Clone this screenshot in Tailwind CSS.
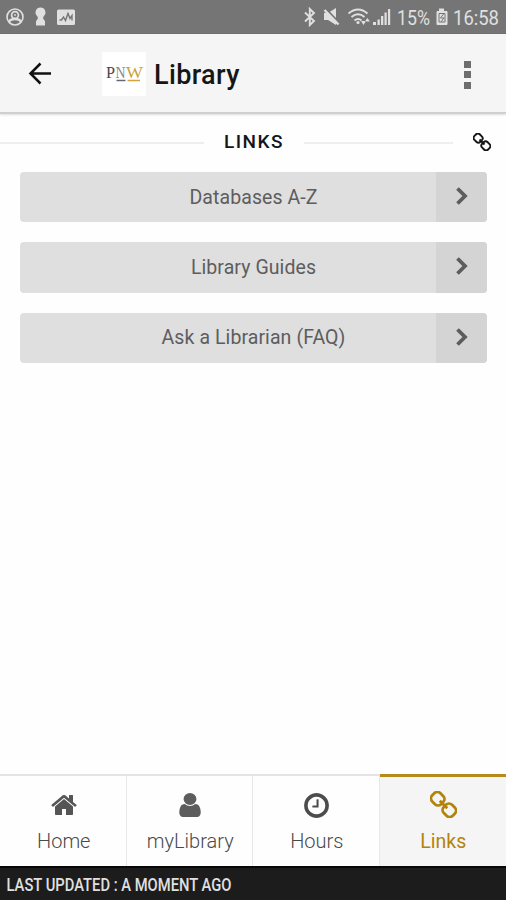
<!DOCTYPE html>
<html lang="en">
<head>
<meta charset="utf-8">
<title>Library</title>
<script src="https://cdn.jsdelivr.net/npm/@tailwindcss/browser@4"></script>
</head>
<body class="w-[506px] h-[900px] overflow-hidden bg-[#fefefe] font-['Roboto',sans-serif]">
<svg class="hidden">
  <symbol id="chain" viewBox="0 0 28 28">
    <g fill="none" stroke="currentColor" stroke-width="2.900" transform="rotate(45 14 14)">
      <rect x="-1" y="8" width="13" height="12" rx="4.500"/>
      <rect x="16" y="8" width="13" height="12" rx="4.500"/>
      <path d="M8.500 14h11" stroke-width="3"/>
    </g>
  </symbol>
  <symbol id="chevron" viewBox="0 0 14 20">
    <path d="M2.500 2.500L10 10l-7.500 7.500" fill="none" stroke="currentColor" stroke-width="3.800"/>
  </symbol>
</svg>
<div class="flex flex-col h-full">
  <div class="h-[34px] shrink-0 bg-[#757575] border-b border-[#666] text-[#e0e0e0]">
    <svg class="block" width="506" height="33" viewBox="0 0 506 33" fill="currentColor">
      <g fill="none" stroke="currentColor">
        <circle cx="15" cy="17" r="8" stroke-width="1.600"/>
        <circle cx="15" cy="15" r="3.400" stroke-width="1.700"/>
        <circle cx="15" cy="15" r=".6" stroke-width="1"/>
        <path d="M9 22q1-3 6-3t6 3" stroke-width="2.400"/>
      </g>
      <path d="M40.500 7.500a5 5 0 0 1 3.200 8.800l-.7 2 2 3v4.200h-9v-4.200l2-3-.7-2a5 5 0 0 1 3.200-8.800z"/>
      <rect x="57" y="9.500" width="18" height="15.500" rx="1.500"/>
      <path d="M59.500 20h2l2-3 2 3.500 2.500-7 2 5 2-3v5" fill="none" stroke="#757575" stroke-width="1.400"/>
      <path d="M305 12.500l9 8.500-4.200 4V9l4.200 4-9 8.500" fill="none" stroke="currentColor" stroke-width="1.900"/>
      <path d="M324 13h4l8-5v17l-8-5h-4z"/>
      <path d="M325 8l15 15.500" stroke="#757575" stroke-width="1.800"/>
      <path d="M324.500 10l14 14.500" stroke="currentColor" stroke-width="2.400"/>
      <g fill="none" stroke="currentColor" stroke-width="1.900">
        <path d="M348.500 13.500q9.500-8 19 0M351.500 17q6.500-5.500 13 0M354.500 20.500q3.500-3 7 0"/>
      </g>
      <circle cx="358" cy="22.500" r="1.600"/>
      <path d="M361 21l2.500 4 2.500-4zM365 21.500l2.300-3.500 2.700 3.500z"/>
      <path d="M373 22h3v3h-3zM377.500 19.500h2.300V25h-2.300zM381 16h2.300v9H381zM384.500 12.500h2.200V25h-2.200zM388 9h2.200v16H388z"/>
      <text x="397" y="25" font-size="20.500" textLength="33" lengthAdjust="spacingAndGlyphs">15%</text>
      <path d="M439 8.500h5V11h2.500q1 0 1 1v12q0 1-1 1h-9q-1 0-1-1V12q0-1 1-1h1.500z"/>
      <path d="M439 13.500h6v8.500h-6zM443.500 14l-3 4h3.500l-3 4" fill="none" stroke="#757575" stroke-width="1"/>
      <text x="453" y="25" font-size="20.500" textLength="46" lengthAdjust="spacingAndGlyphs">16:58</text>
    </svg>
  </div>
  <header class="flex items-center h-[80px] shrink-0 bg-[#f5f5f5] border-b-2 border-[#cfcfcf] pt-[2px] pl-[28px] shadow-[0_1px_2px_#ddd]">
    <svg class="w-6 h-6" viewBox="0 0 24 24" fill="none" stroke="#111" stroke-width="2.500"><path d="M23 11.500H2.500M12.500 1.500l-10 10 10 10"/></svg>
    <div class="ml-[50px] w-[44px] h-[44px] bg-white">
      <svg class="block" width="44" height="44" viewBox="0 0 44 44" font-family="Liberation Serif, serif" font-size="17">
        <text x="4" y="26" fill="#444" textLength="9" lengthAdjust="spacingAndGlyphs">P</text>
        <text x="13.500" y="26" fill="#888" textLength="10" lengthAdjust="spacingAndGlyphs">N</text>
        <text x="24" y="26" fill="#cba23a" textLength="17" lengthAdjust="spacingAndGlyphs">W</text>
        <path d="M14.500 28.500h9" stroke="#626875" stroke-width="1.500"/><path d="M25.500 28.500h12.500" stroke="#d0a43b" stroke-width="1.500"/>
      </svg>
    </div>
    <h1 class="ml-[8px] w-[90px] pt-[2px] text-[27px] font-medium text-[#161616] leading-8 whitespace-nowrap tracking-[0.350px]">Library</h1>
    <div class="ml-[220px] pt-[1px] flex flex-col gap-[3.500px]">
      <i class="block size-[7px] bg-[#6d6d6d]"></i><i class="block size-[7px] bg-[#6d6d6d]"></i><i class="block size-[7px] bg-[#6d6d6d]"></i>
    </div>
  </header>
  <main class="grow">
    <div class="flex items-center h-[58px]">
      <div class="w-[204px] h-[2px] bg-[#eee]"></div>
      <h2 class="w-[100px] pb-[2px] text-center text-[19px] font-medium tracking-[1.500px] text-[#151515]">LINKS</h2>
      <div class="w-[149px] h-[2px] bg-[#eee]"></div>
      <svg class="ml-[20px] mb-[2px] w-[18px] h-[18px] text-[#151515]"><use href="#chain"/></svg>
    </div>
    <div class="flex flex-col gap-[20px] pl-[20px] text-[19.500px] text-[#5d5d5d] tracking-[0.080px]">
      <a class="flex w-[467px] h-[50.300px] rounded-[4px] overflow-hidden bg-[#dfdfdf]"><span class="flex grow items-center justify-center pl-[51px]">Databases A-Z</span><span class="flex items-center justify-center w-[51px] bg-[#d4d4d4]"><svg class="w-[14px] h-[20px] mb-[2px]"><use href="#chevron"/></svg></span></a>
      <a class="flex w-[467px] h-[50.300px] rounded-[4px] overflow-hidden bg-[#dfdfdf]"><span class="flex grow items-center justify-center pl-[51px]">Library Guides</span><span class="flex items-center justify-center w-[51px] bg-[#d4d4d4]"><svg class="w-[14px] h-[20px] mb-[2px]"><use href="#chevron"/></svg></span></a>
      <a class="flex w-[467px] h-[50.300px] rounded-[4px] overflow-hidden bg-[#dfdfdf]"><span class="flex grow items-center justify-center pl-[51px]">Ask a Librarian (FAQ)</span><span class="flex items-center justify-center w-[51px] bg-[#d4d4d4]"><svg class="w-[14px] h-[20px] mb-[2px]"><use href="#chevron"/></svg></span></a>
    </div>
  </main>
  <nav class="grid grid-cols-4 h-[92px] shrink-0 text-[20px] font-light text-[#4a4a4a]">
    <a class="flex flex-col items-center border-t-2 border-r border-t-[#e3e3e3] border-r-[#e8e8e8] pt-[15px] pl-[2px]"><svg class="w-[28px] h-[28px]" viewBox="0 0 1792 1792" fill="#555"><path d="M1472 992v480q0 26-19 45t-45 19h-384v-384h-256v384h-384q-26 0-45-19t-19-45v-480q0-1 .5-3t.5-3l575-474 575 474q1 2 1 6zm223-69l-62 74q-8 9-21 11h-3q-13 0-21-7l-692-577-692 577q-12 8-24 7-13-2-21-11l-62-74q-8-10-7-23.500t11-21.500l719-599q32-26 76-26t76 26l244 204v-195q0-14 9-23t23-9h192q14 0 23 9t9 23v408l219 182q10 8 11 21.500t-7 23.500z"/></svg><span class="mt-[8px] leading-[28px]">Home</span></a>
    <a class="flex flex-col items-center border-t-2 border-r border-t-[#e3e3e3] border-r-[#e8e8e8] pt-[15px] pl-[2px]"><svg class="w-[30px] h-[28px]" viewBox="0 0 1792 1792" preserveAspectRatio="none" fill="#5d5d5d"><path d="M1536 1399q0 109-62.500 187t-150.500 78h-854q-88 0-150.500-78t-62.500-187q0-85 8.500-160.500t31.500-152 58.500-131 94-89 134.500-34.500q131 128 313 128t313-128q76 0 134.500 34.500t94 89 58.500 131 31.500 152 8.500 160.500zm-256-887q0 159-112.500 271.500t-271.500 112.500-271.500-112.500-112.500-271.500 112.500-271.500 271.500-112.500 271.500 112.500 112.500 271.500z"/></svg><span class="mt-[8px] leading-[28px]">myLibrary</span></a>
    <a class="flex flex-col items-center border-t-2 border-r border-t-[#e3e3e3] border-r-[#e8e8e8] pt-[15px] pl-[2px]"><svg class="w-[29px] h-[29px]" viewBox="0 0 1792 1792" fill="#4c4c4c"><path d="M1024 544v448q0 14-9 23t-23 9h-320q-14 0-23-9t-9-23v-64q0-14 9-23t23-9h224v-352q0-14 9-23t23-9h64q14 0 23 9t9 23zm416 352q0-148-73-273t-198-198-273-73-273 73-198 198-73 273 73 273 198 198 273 73 273-73 198-198 73-273zm224 0q0 209-103 385.500t-279.500 279.500-385.500 103-385.500-103-279.500-279.500-103-385.500 103-385.500 279.500-279.500 385.500-103 385.500 103 279.500 279.500 103 385.500z"/></svg><span class="mt-[7px] leading-[28px]">Hours</span></a>
    <a class="flex flex-col items-center border-t-3 border-[#b88a1c] bg-[#f5f5f5] pt-[14px] pl-[1px] text-[#b3830c]"><svg class="w-[27px] h-[27px]"><use href="#chain"/></svg><span class="mt-[10px] leading-[28px] font-normal text-[19.500px]">Links</span></a>
  </nav>
  <footer class="h-[34px] shrink-0 bg-[#1c1c1c] border-t-2 border-[#080808] text-[#e0e0e0]">
    <svg class="block" width="506" height="32"><text x="6.500" y="22.500" font-size="17.500" font-weight="500" fill="currentColor" textLength="225" lengthAdjust="spacingAndGlyphs">LAST UPDATED : A MOMENT AGO</text></svg>
  </footer>
</div>
</body>
</html>
